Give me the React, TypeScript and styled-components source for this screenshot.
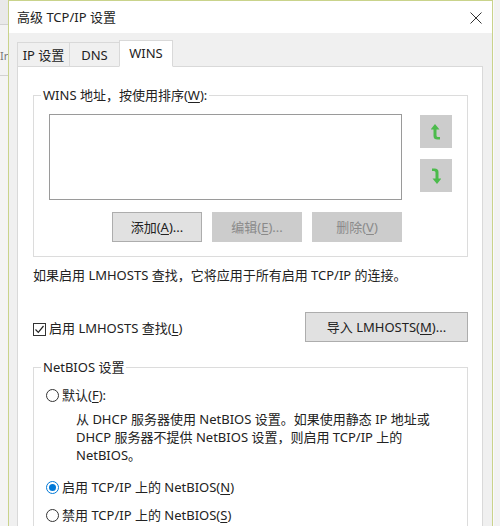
import React from "react";
import styled, { createGlobalStyle, css } from "styled-components";

const Global = createGlobalStyle`
  html, body { margin: 0; padding: 0; }
  body {
    font-family: "Noto Sans", "Noto Sans CJK SC", sans-serif;
    font-size: 13px;
    color: #222;
    background: #efefef;
  }
  u { text-decoration-thickness: 1px; text-underline-offset: 2px; }
`;

const Page = styled.div`
  display: flex;
  align-items: flex-start;
  width: 500px;
  height: 526px;
  overflow: hidden;
`;

const Behind = styled.div`
  width: 8px;
  flex: none;
  align-self: stretch;
  display: flex;
  flex-direction: column;
  background: #f4f4f4;
  overflow: hidden;
`;

const BehindBand = styled.div<{ $h: number; $bg: string }>`
  height: ${(p) => p.$h}px;
  flex: none;
  background: ${(p) => p.$bg};
  border-bottom: 1px solid #d2d2d2;
  font-size: 11px;
  color: #777;
  display: flex;
  align-items: center;
  padding-top: 10px;
  box-sizing: border-box;
  white-space: nowrap;
`;

const Dialog = styled.div`
  width: 483px;
  flex: none;
  border: 1px solid #c9d38b;
  border-bottom: none;
  background: #f0f0f0;
  display: flex;
  flex-direction: column;
`;

const RightEdge = styled.div`
  flex: 1;
  align-self: stretch;
  background: #f2f2f2;
  border-left: 1px solid #fafafa;
`;

const TitleBar = styled.div`
  flex: none;
  height: 32px;
  background: #fff;
  display: flex;
  align-items: center;
  justify-content: space-between;
  padding: 0 10px 0 8px;
  line-height: 18px;
`;

const CloseBox = styled.div`
  width: 12px;
  height: 12px;
  display: flex;
  margin-top: 1px;
`;

const Body = styled.div`
  padding: 7px 9px 0 8px;
  display: flex;
  flex-direction: column;
`;

const TabRow = styled.div`
  flex: none;
  display: flex;
  align-items: flex-end;
  height: 27px;
  margin-bottom: -1px;
  position: relative;
  z-index: 1;
`;

const Tab = styled.div<{ $w: number; $active?: boolean }>`
  width: ${(p) => p.$w}px;
  box-sizing: border-box;
  height: 25px;
  border: 1px solid #d9d9d9;
  background: #f0f0f0;
  margin-right: -1px;
  display: flex;
  align-items: center;
  justify-content: center;
  line-height: 18px;
  ${(p) =>
    p.$active &&
    css`
      height: 27px;
      background: #fff;
      border-bottom-color: #fff;
      padding-bottom: 2px;
    `}
`;

const Panel = styled.div`
  background: #fff;
  border: 1px solid #d9d9d9;
  border-bottom: none;
  padding: 19px 14px 0 15px;
  display: flex;
  flex-direction: column;
`;

const Group = styled.fieldset`
  margin: 0;
  padding: 0;
  min-width: 0;
  border: 1px solid #dcdcdc;
`;

const Legend = styled.legend`
  margin-left: 7px;
  padding: 0 2px;
  line-height: 18px;
`;

const GroupBody = styled.div<{ $pad: string }>`
  padding: ${(p) => p.$pad};
  display: flex;
  flex-direction: column;
`;

const ListRow = styled.div`
  display: flex;
  gap: 18px;
  align-items: flex-start;
`;

const ListBox = styled.div`
  width: 353px;
  height: 86px;
  box-sizing: border-box;
  border: 1px solid #9a9a9a;
  background: #fff;
`;

const ArrowCol = styled.div`
  display: flex;
  flex-direction: column;
  gap: 11px;
  padding-top: 1px;
`;

const ArrowButton = styled.div`
  width: 32px;
  height: 33px;
  background: #cccccc;
  display: flex;
  align-items: center;
  justify-content: center;
`;

const ButtonRow = styled.div`
  width: 353px;
  margin-top: 12px;
  display: flex;
  justify-content: flex-end;
  gap: 10px;
`;

const Button = styled.div<{ $w: number; $disabled?: boolean }>`
  width: ${(p) => p.$w}px;
  height: 30px;
  box-sizing: border-box;
  border: 1px solid #adadad;
  background: #e1e1e1;
  display: flex;
  align-items: center;
  justify-content: center;
  line-height: 18px;
  ${(p) =>
    p.$disabled &&
    css`
      background: #cccccc;
      border-color: #cccccc;
      color: #8a8a8a;
    `}
`;

const InfoText = styled.div`
  margin-top: 9px;
  line-height: 18px;
`;

const CheckRow = styled.div`
  margin-top: 28px;
  height: 30px;
  display: flex;
  align-items: center;
  justify-content: space-between;
`;

const CheckLabel = styled.div`
  display: flex;
  align-items: center;
  gap: 3px;
  line-height: 18px;
  padding-top: 2px;
`;

const CheckBox = styled.div`
  width: 13px;
  height: 13px;
  box-sizing: border-box;
  border: 1px solid #333;
  display: flex;
  align-items: center;
  justify-content: center;
  margin-top: 2px;
`;

const SecondGroup = styled(Group)`
  margin-top: 16px;
`;

const RadioRow = styled.div<{ $mt: number }>`
  margin-top: ${(p) => p.$mt}px;
  display: flex;
  align-items: center;
  gap: 3px;
  line-height: 18px;
`;

const Radio = styled.div<{ $checked?: boolean }>`
  width: 13px;
  height: 13px;
  box-sizing: border-box;
  border-radius: 50%;
  border: 1px solid ${(p) => (p.$checked ? "#0078d7" : "#333")};
  display: flex;
  align-items: center;
  justify-content: center;
  &::after {
    content: "";
    width: 7px;
    height: 7px;
    border-radius: 50%;
    background: ${(p) => (p.$checked ? "#0078d7" : "transparent")};
  }
`;

const Description = styled.div`
  margin-top: 6px;
  padding-left: 30px;
  line-height: 18px;
  white-space: nowrap;
`;

const GreenArrow = ({ down }: { down?: boolean }) => (
  <svg
    width="10"
    height="16"
    viewBox="0 0 10 16"
    style={down ? { transform: "rotate(180deg)" } : undefined}
  >
    <path
      d="M4 0 L8.5 5.5 L5.5 5.5 L5.5 11.5 Q5.5 13 7 13 L9 13 L9 15.5 L6.5 15.5 Q2.5 15.5 2.5 12 L2.5 5.5 L-0.5 5.5 Z"
      fill="#4cbb4c"
    />
  </svg>
);

export default function App() {
  return (
    <>
      <Global />
      <Page>
        <Behind>
          <BehindBand $h={25} $bg="#e9e9e9" />
          <BehindBand $h={51} $bg="#f3f3f3">Ir</BehindBand>
        </Behind>
        <Dialog>
          <TitleBar>
            <span>高级 TCP/IP 设置</span>
            <CloseBox>
              <svg width="12" height="12" viewBox="0 0 12 12">
                <path d="M0.5 0.5 L11.5 11.5 M11.5 0.5 L0.5 11.5" stroke="#333" strokeWidth="1" />
              </svg>
            </CloseBox>
          </TitleBar>
          <Body>
            <TabRow>
              <Tab $w={53}>IP 设置</Tab>
              <Tab $w={51}>DNS</Tab>
              <Tab $w={54} $active>
                WINS
              </Tab>
            </TabRow>
            <Panel>
              <Group>
                <Legend>
                  WINS 地址，按使用排序(<u>W</u>):
                </Legend>
                <GroupBody $pad="10px 15px 14px 15px">
                  <ListRow>
                    <ListBox />
                    <ArrowCol>
                      <ArrowButton>
                        <GreenArrow />
                      </ArrowButton>
                      <ArrowButton>
                        <GreenArrow down />
                      </ArrowButton>
                    </ArrowCol>
                  </ListRow>
                  <ButtonRow>
                    <Button $w={90}>
                      添加(<u>A</u>)...
                    </Button>
                    <Button $w={90} $disabled>
                      编辑(<u>E</u>)...
                    </Button>
                    <Button $w={90} $disabled>
                      删除(<u>V</u>)
                    </Button>
                  </ButtonRow>
                </GroupBody>
              </Group>
              <InfoText>如果启用 LMHOSTS 查找，它将应用于所有启用 TCP/IP 的连接。</InfoText>
              <CheckRow>
                <CheckLabel>
                  <CheckBox>
                    <svg width="11" height="11" viewBox="0 0 11 11">
                      <path d="M1.5 5.5 L4.3 8.3 L9.5 2" fill="none" stroke="#222" strokeWidth="1.2" />
                    </svg>
                  </CheckBox>
                  <span>
                    启用 LMHOSTS 查找(<u>L</u>)
                  </span>
                </CheckLabel>
                <Button $w={163}>
                  导入 LMHOSTS(<u>M</u>)...
                </Button>
              </CheckRow>
              <SecondGroup>
                <Legend>NetBIOS 设置</Legend>
                <GroupBody $pad="10px 12px 20px 12px">
                  <RadioRow $mt={0}>
                    <Radio />
                    <span>
                      默认(<u>F</u>):
                    </span>
                  </RadioRow>
                  <Description>
                    从 DHCP 服务器使用 NetBIOS 设置。如果使用静态 IP 地址或
                    <br />
                    DHCP 服务器不提供 NetBIOS 设置，则启用 TCP/IP 上的
                    <br />
                    NetBIOS。
                  </Description>
                  <RadioRow $mt={14}>
                    <Radio $checked />
                    <span>
                      启用 TCP/IP 上的 NetBIOS(<u>N</u>)
                    </span>
                  </RadioRow>
                  <RadioRow $mt={10}>
                    <Radio />
                    <span>
                      禁用 TCP/IP 上的 NetBIOS(<u>S</u>)
                    </span>
                  </RadioRow>
                </GroupBody>
              </SecondGroup>
            </Panel>
          </Body>
        </Dialog>
        <RightEdge />
      </Page>
    </>
  );
}
